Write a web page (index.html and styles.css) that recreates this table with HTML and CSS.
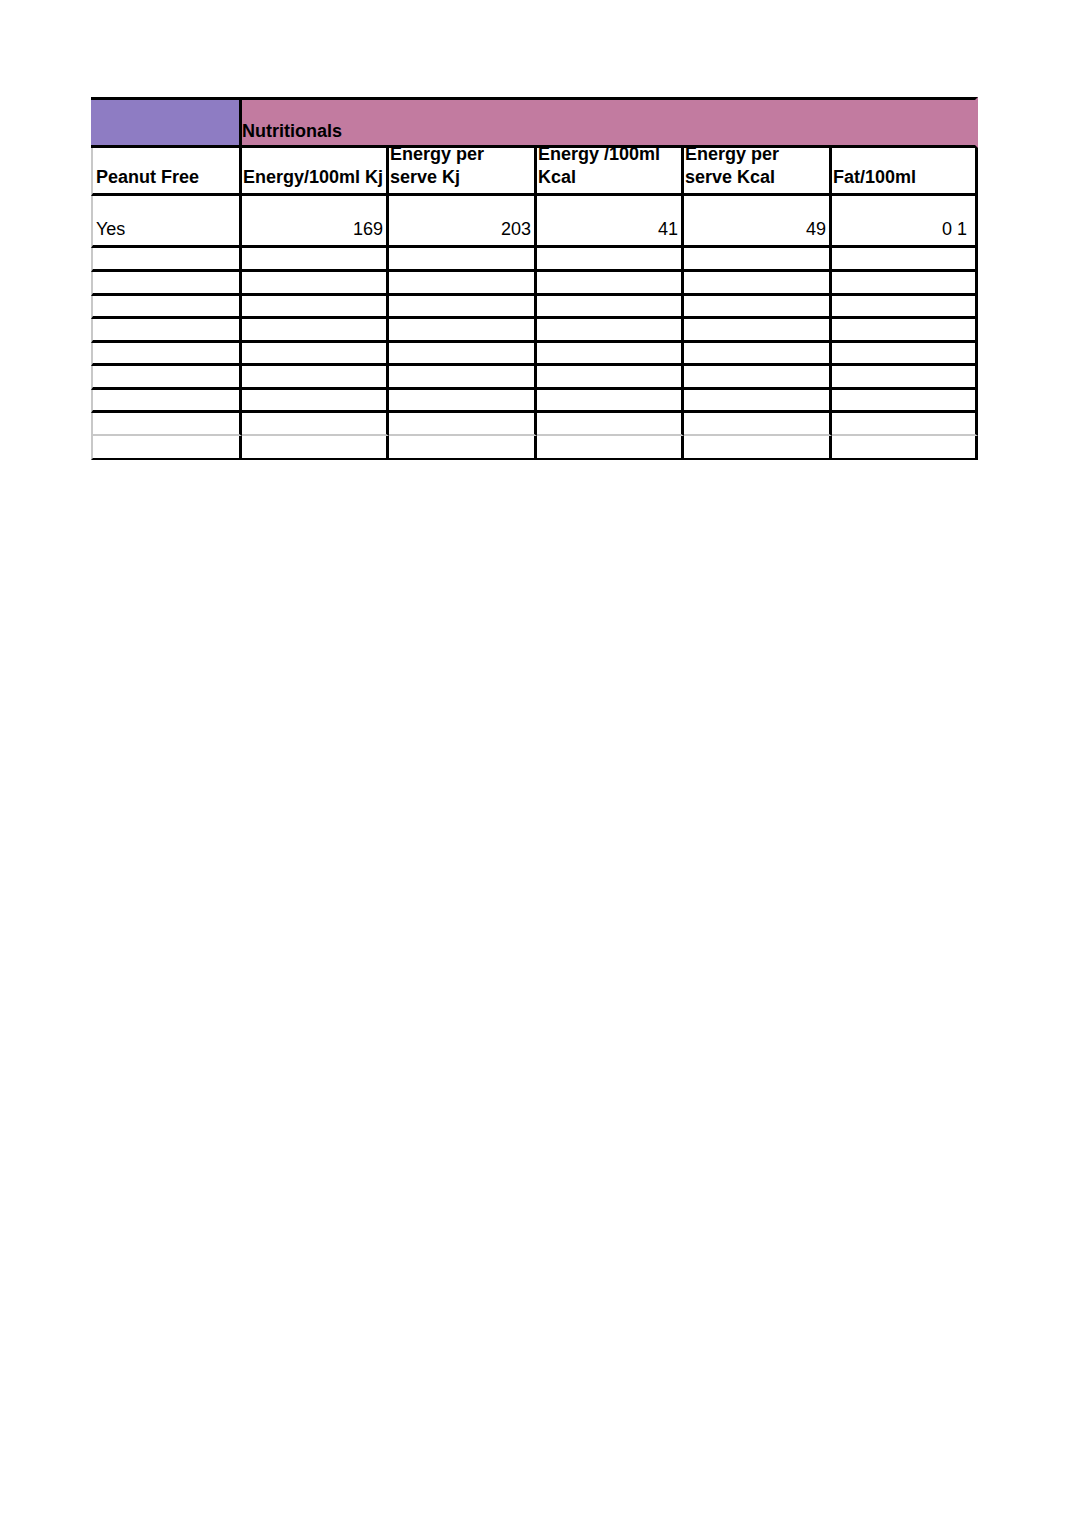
FILE: index.html
```html
<!DOCTYPE html>
<html>
<head>
<meta charset="utf-8">
<title>Nutritionals</title>
<link rel="stylesheet" href="styles.css">
</head>
<body>
<div class="page">
<table class="sheet">
  <tr class="r-top">
    <td class="c1 purple"><div class="in w148 h45"></div></td>
    <td class="pink" colspan="5"><div class="in w733 h45 pb3 bold"><div>Nutritionals</div></div></td>
  </tr>
  <tr class="r-head">
    <td class="c1 gl"><div class="in w146 h45 pb5 pl3 bold"><div>Peanut Free</div></div></td>
    <td><div class="in w144 h45 pb5 pl1 bold"><div>Energy/100ml Kj</div></div></td>
    <td><div class="in w145 h45 pb5 pl1 bold"><div>Energy per<br>serve Kj</div></div></td>
    <td><div class="in w144 h45 pb5 pl1 bold"><div>Energy /100ml<br>Kcal</div></div></td>
    <td><div class="in w145 h45 pb5 pl1 bold"><div>Energy per<br>serve Kcal</div></div></td>
    <td><div class="in w143 h45 pb5 pl1 bold"><div>Fat/100ml</div></div></td>
  </tr>
  <tr class="r-data">
    <td class="c1 gl"><div class="in w146 h49 pb5 pl3"><div>Yes</div></div></td>
    <td><div class="in w144 h49 pb5 num"><div>169</div></div></td>
    <td><div class="in w145 h49 pb5 num"><div>203</div></div></td>
    <td><div class="in w144 h49 pb5 num"><div>41</div></div></td>
    <td><div class="in w145 h49 pb5 num"><div>49</div></div></td>
    <td><div class="in w143 h49 pb5 num fat"><div>0&nbsp;1</div></div></td>
  </tr>
  <tr><td class="c1 gl"><div class="in w146 h21"></div></td><td><div class="in w144 h21"></div></td><td><div class="in w145 h21"></div></td><td><div class="in w144 h21"></div></td><td><div class="in w145 h21"></div></td><td><div class="in w143 h21"></div></td></tr>
  <tr><td class="c1 gl"><div class="in w146 h21"></div></td><td><div class="in w144 h21"></div></td><td><div class="in w145 h21"></div></td><td><div class="in w144 h21"></div></td><td><div class="in w145 h21"></div></td><td><div class="in w143 h21"></div></td></tr>
  <tr><td class="c1 gl"><div class="in w146 h20"></div></td><td><div class="in w144 h20"></div></td><td><div class="in w145 h20"></div></td><td><div class="in w144 h20"></div></td><td><div class="in w145 h20"></div></td><td><div class="in w143 h20"></div></td></tr>
  <tr><td class="c1 gl"><div class="in w146 h21"></div></td><td><div class="in w144 h21"></div></td><td><div class="in w145 h21"></div></td><td><div class="in w144 h21"></div></td><td><div class="in w145 h21"></div></td><td><div class="in w143 h21"></div></td></tr>
  <tr><td class="c1 gl"><div class="in w146 h20"></div></td><td><div class="in w144 h20"></div></td><td><div class="in w145 h20"></div></td><td><div class="in w144 h20"></div></td><td><div class="in w145 h20"></div></td><td><div class="in w143 h20"></div></td></tr>
  <tr><td class="c1 gl"><div class="in w146 h21"></div></td><td><div class="in w144 h21"></div></td><td><div class="in w145 h21"></div></td><td><div class="in w144 h21"></div></td><td><div class="in w145 h21"></div></td><td><div class="in w143 h21"></div></td></tr>
  <tr><td class="c1 gl"><div class="in w146 h20"></div></td><td><div class="in w144 h20"></div></td><td><div class="in w145 h20"></div></td><td><div class="in w144 h20"></div></td><td><div class="in w145 h20"></div></td><td><div class="in w143 h20"></div></td></tr>
  <tr class="r-grey"><td class="c1 gl"><div class="in w146 h21"></div></td><td><div class="in w144 h21"></div></td><td><div class="in w145 h21"></div></td><td><div class="in w144 h21"></div></td><td><div class="in w145 h21"></div></td><td><div class="in w143 h21"></div></td></tr>
  <tr class="r-last"><td class="c1 gl"><div class="in w146 h22"></div></td><td><div class="in w144 h22"></div></td><td><div class="in w145 h22"></div></td><td><div class="in w144 h22"></div></td><td><div class="in w145 h22"></div></td><td><div class="in w143 h22"></div></td></tr>
</table>
</div>
</body>
</html>
```

FILE: styles.css
```css
html, body {
  margin: 0;
  padding: 0;
  background: #ffffff;
}

.page {
  padding: 97px 0 0 91px;
  font-family: "Liberation Sans", Arial, sans-serif;
  font-size: 18px;
  color: #000000;
}

.sheet {
  border-collapse: separate;
  border-spacing: 0;
}

.sheet td {
  padding: 0;
  border-right: 3px solid #000000;
  border-bottom: 3px solid #000000;
  vertical-align: bottom;
}

.sheet .gl {
  border-left: 2px solid #c8c8c8;
}

.r-top td {
  border-top: 3px solid #000000;
}

.purple {
  background: #8e7cc3;
}

.pink {
  background: #c27ba0;
}

.sheet td.pink {
  border-right-color: #c27ba0;
}

.r-grey td {
  border-bottom: 2px solid #c8c8c8;
}

.r-last td {
  border-bottom: 2px solid #000000;
}

.in {
  box-sizing: border-box;
  display: flex;
  flex-direction: column;
  justify-content: flex-end;
  overflow: hidden;
  line-height: 23px;
  white-space: nowrap;
}

.bold { font-weight: bold; }
.num { text-align: right; padding-right: 3px; }
.num.fat { padding-right: 8px; }

.pl1 { padding-left: 1px; }
.pl3 { padding-left: 3px; }
.pb3 { padding-bottom: 2px; }
.pb5 { padding-bottom: 4px; }

.w143 { width: 143px; }
.w144 { width: 144px; }
.w145 { width: 145px; }
.w146 { width: 146px; }
.w148 { width: 148px; }
.w733 { width: 733px; }

.h20 { height: 20px; }
.h21 { height: 21px; }
.h22 { height: 22px; }
.h45 { height: 45px; }
.h49 { height: 49px; }
```
